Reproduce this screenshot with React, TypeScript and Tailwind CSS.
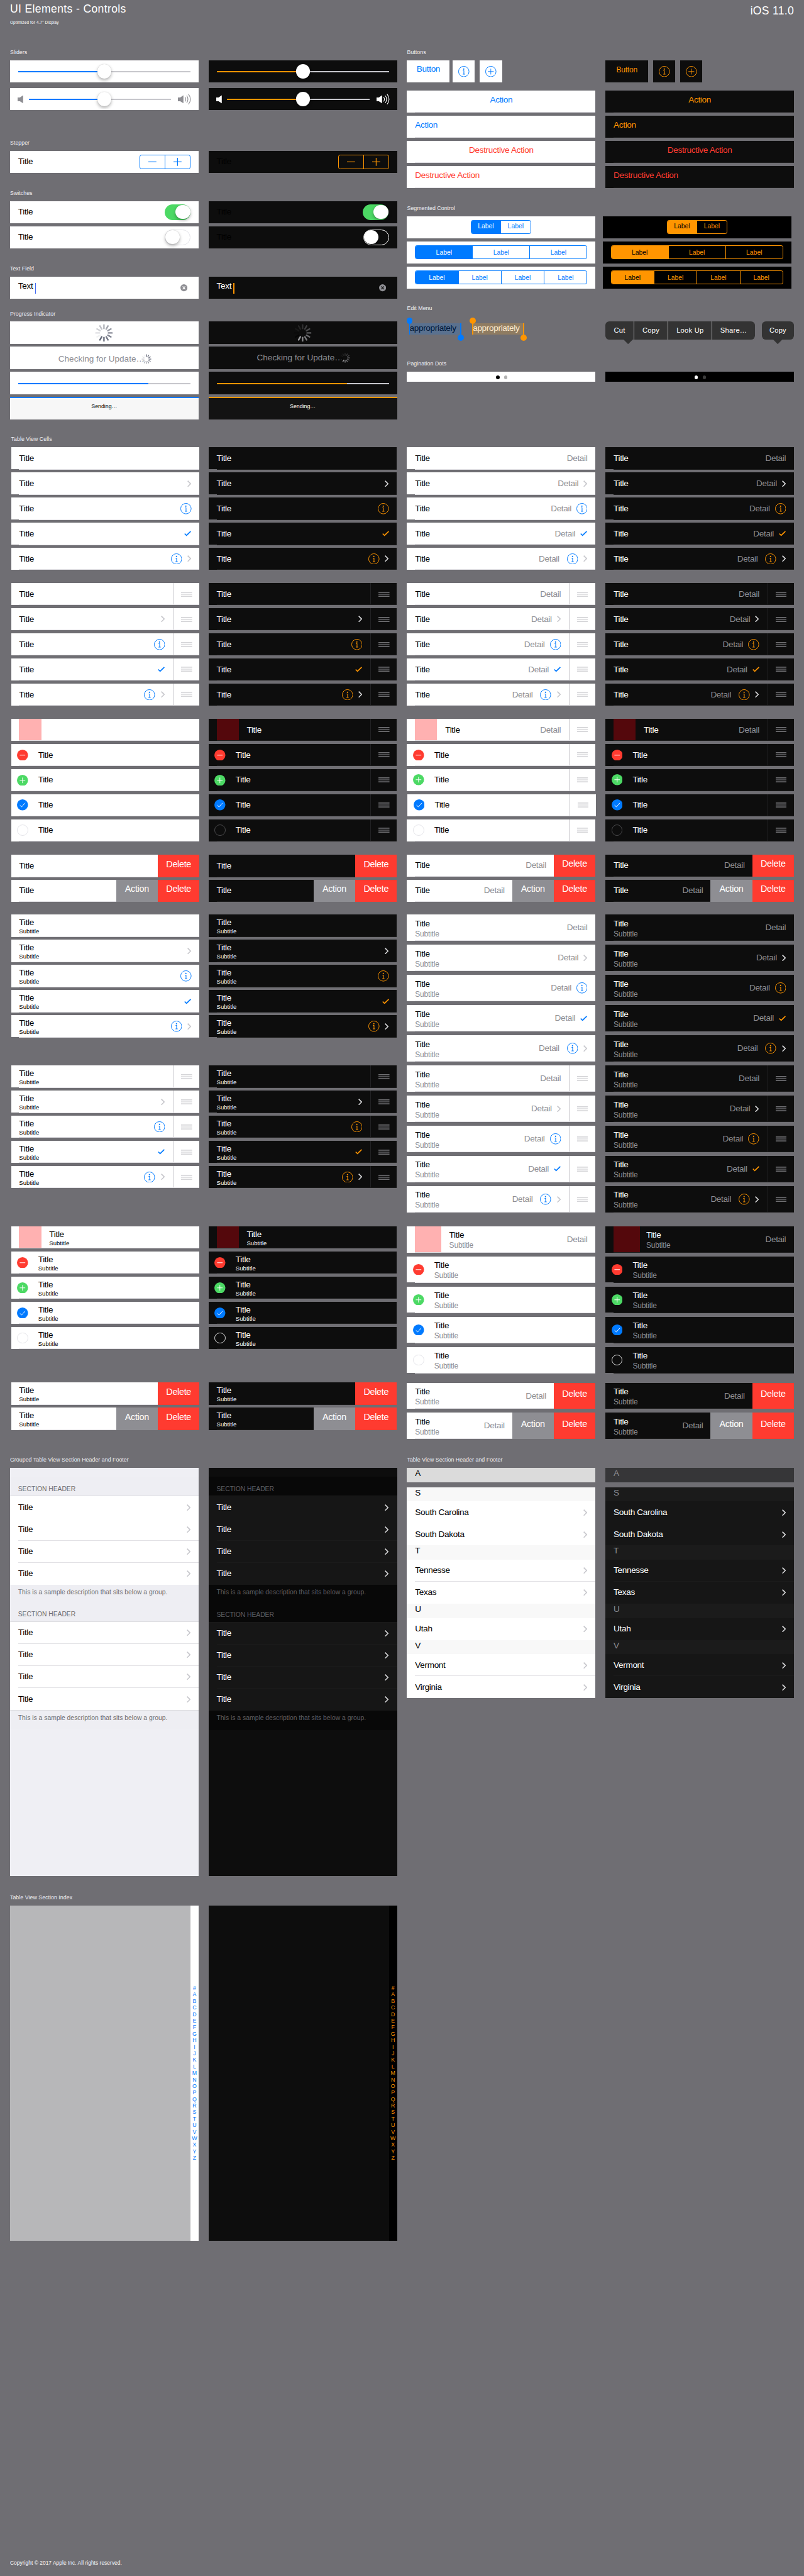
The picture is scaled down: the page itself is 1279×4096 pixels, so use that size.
import React from "react";
import clsx from "clsx";

type Themed = { dark?: boolean };
type Accessory = "chevron" | "info" | "check" | "both";
type Lead = "image" | "minus" | "plus" | "tick" | "empty";

/* ---------- Layout helpers ---------- */

function Section({ label, className, children }: { label: string; className?: string; children: React.ReactNode }) {
  return (
    <section className={className}>
      <h2 className="h-[30px] text-[11px] leading-[29px] tracking-[0.06px] text-[#efeff4]">{label}</h2>
      {children}
    </section>
  );
}

function Pair({
  className,
  gap = "gap-[6px]",
  between = "gap-[20px]",
  render,
}: {
  className?: string;
  gap?: string;
  between?: string;
  render: (dark: boolean) => React.ReactNode;
}) {
  return (
    <div className={clsx("flex", between, className)}>
      <div className={clsx("flex w-[375px] shrink-0 flex-col", gap)}>{render(false)}</div>
      <div className={clsx("flex w-[375px] shrink-0 flex-col", gap)}>{render(true)}</div>
    </div>
  );
}

function Row({ dark, className, children }: Themed & { className?: string; children?: React.ReactNode }) {
  return (
    <div className={clsx("relative flex h-[44px] shrink-0 items-center", dark ? "bg-[#0d0d0d]" : "bg-white", className)}>
      {children}
    </div>
  );
}

function Hairline({ dark }: Themed) {
  return <div className={clsx("absolute right-0 bottom-0 left-[16px] h-px", dark ? "bg-[#1b1b1b]" : "bg-[#e2e1e5]")} />;
}

/* ---------- Icons ---------- */

const accent = (dark?: boolean) => (dark ? "text-[#ff9500]" : "text-[#007aff]");

function InfoIcon({ dark }: Themed) {
  return (
    <svg viewBox="0 0 22 22" className={clsx("h-[22px] w-[22px] shrink-0", accent(dark))} fill="none" stroke="currentColor">
      <circle cx="11" cy="11" r="10.4" strokeWidth="1.2" />
      <circle cx="10.9" cy="6.1" r="1.3" fill="currentColor" stroke="none" />
      <path d="M9.2 9.3H11.2V16.2M9 16.4H13.3" strokeWidth="1.3" />
    </svg>
  );
}

function AddIcon({ dark }: Themed) {
  return (
    <svg viewBox="0 0 22 22" className={clsx("h-[22px] w-[22px] shrink-0", accent(dark))} fill="none" stroke="currentColor">
      <circle cx="11" cy="11" r="10.4" strokeWidth="1.2" />
      <path d="M5.2 11H16.8M11 5.2V16.8" strokeWidth="1.1" />
    </svg>
  );
}

function Chevron({ dark }: Themed) {
  return (
    <svg viewBox="0 0 8 13" className={clsx("h-[13px] w-[8px] shrink-0", dark ? "text-[#d8d8da]" : "text-[#c7c7cc]")} fill="none" stroke="currentColor" strokeWidth="2">
      <path d="M0.8 0.8L6.5 6.5L0.8 12.2" />
    </svg>
  );
}

function Check({ dark }: Themed) {
  return (
    <svg viewBox="0 0 14 11" className={clsx("h-[11px] w-[14px] shrink-0", accent(dark))} fill="none" stroke="currentColor" strokeWidth="2.1">
      <path d="M1 5.6L4.6 9.3L13 1" />
    </svg>
  );
}

function Grip({ dark }: Themed) {
  return (
    <div className={clsx("flex h-full w-[53px] shrink-0 items-center border-l pl-[15px]", dark ? "border-[#222224]" : "border-[#c8c7cc]")}>
      <svg viewBox="0 0 22 10" className={clsx("h-[10px] w-[22px]", dark ? "text-[#8e8e93]" : "text-[#c7c7cc]")} stroke="currentColor" strokeWidth="1.5">
        <path d="M0 1H22M0 5H22M0 9H22" />
      </svg>
    </div>
  );
}

function LeadIcon({ kind, ring }: { kind: Exclude<Lead, "image">; ring: string }) {
  if (kind === "empty") return <div className={clsx("h-[22px] w-[22px] shrink-0 rounded-full border", ring)} />;
  const fill = { minus: "text-[#ff3b30]", plus: "text-[#4cd964]", tick: "text-[#007aff]" }[kind];
  const path = { minus: "M5.5 11H16.5", plus: "M5.5 11H16.5M11 5.5V16.5", tick: "M5.8 11.6L9.3 15L16.3 7.2" }[kind];
  return (
    <svg viewBox="0 0 22 22" className={clsx("h-[22px] w-[22px] shrink-0", fill)}>
      <circle cx="11" cy="11" r="11" fill="currentColor" />
      <path d={path} fill="none" stroke="white" strokeWidth="1.2" />
    </svg>
  );
}

function Speaker({ loud, className }: { loud?: boolean; className?: string }) {
  return (
    <svg viewBox={loud ? "0 0 27 22" : "0 0 11 22"} className={clsx("h-[22px] shrink-0", loud ? "w-[27px]" : "w-[11px]", className)}>
      <path d="M0 7.4H4.6L11 3V19L4.6 14.9H0Z" fill="currentColor" />
      {loud && (
        <path d="M14 6.6Q17.6 11 14 15.6M17.4 3.8Q22.6 11 17.4 18.4M21 0.8Q28.8 11 21 21.2" fill="none" stroke="currentColor" strokeWidth="1.4" />
      )}
    </svg>
  );
}

/* Twelve rounded spokes; shades run clockwise beginning at the given spoke. */
function Spinner({ className, from, shades }: { className: string; from: number; shades: string[] }) {
  return (
    <svg viewBox="-18 -18 36 36" className={className}>
      {shades.map((c, i) => (
        <rect key={i} x="-1.5" y="-17.5" width="3" height="10" rx="1.5" fill={c} transform={`rotate(${(from + i) * 30})`} />
      ))}
    </svg>
  );
}

const lightShades = ["#f1f2f3", "#dfe0e3", "#cfd0d4", "#c0c1c7", "#b1b3ba", "#a3a5ae", "#9497a2", "#898c98", "#7e818f", "#757986", "#6d7180", "#656a79"];
const darkShades = ["#050505", "#0a0a0a", "#191919", "#242424", "#303031", "#3d3d3f", "#4b4b4d", "#5a5a5c", "#69696c", "#78787b", "#87878a", "#98989b"];

/* ---------- Controls ---------- */

function Knob({ className }: { className?: string }) {
  return <div className={clsx("absolute rounded-full bg-white shadow-[0_3px_6px_rgba(0,0,0,0.3),0_0_1px_rgba(0,0,0,0.25)]", className)} />;
}

function Slider({ dark, volume }: Themed & { volume?: boolean }) {
  return (
    <Row dark={dark} className={volume ? "pr-[14px] pl-[15px]" : "px-[16px]"}>
      {volume && <Speaker className={clsx("mr-[11px]", dark ? "text-white" : "text-[#8e8e93]")} />}
      <div className="mt-[2px] flex h-[2px] flex-1">
        <div className={clsx("h-full", volume ? "w-[150px]" : "w-[171px]", dark ? "bg-[#ff9500]" : "bg-[#007aff]")} />
        <div className="h-full flex-1 bg-[#c7c7cc]" />
      </div>
      {volume && <Speaker loud className={clsx("ml-[14px]", dark ? "text-white" : "text-[#8e8e93]")} />}
      <Knob className="top-[8px] left-[174px] h-[28px] w-[28px]" />
    </Row>
  );
}

function FieldTitle() {
  return <span className="text-[17px] tracking-[-0.41px] text-black">Title</span>;
}

function Stepper({ dark }: Themed) {
  return (
    <Row dark={dark} className="justify-between px-[16px]">
      <FieldTitle />
      <div className={clsx("flex h-[28px] w-[101px] rounded-[4px] border border-current", accent(dark))}>
        <div className="flex flex-1 items-center justify-center border-r border-current">
          <svg viewBox="0 0 16 16" className="h-[16px] w-[16px]" stroke="currentColor" strokeWidth="1.5"><path d="M0 8H16" /></svg>
        </div>
        <div className="flex flex-1 items-center justify-center">
          <svg viewBox="0 0 16 16" className="h-[16px] w-[16px]" stroke="currentColor" strokeWidth="1.5"><path d="M0 8H16M8 0V16" /></svg>
        </div>
      </div>
    </Row>
  );
}

function Switch({ dark, on }: Themed & { on?: boolean }) {
  return (
    <Row dark={dark} className={clsx("justify-between pl-[16px]", dark && on ? "pr-[17px]" : "pr-[16px]")}>
      <FieldTitle />
      <div
        className={clsx(
          "relative h-[31px] w-[51px] rounded-full",
          on ? "bg-[#4cd964]" : dark ? "border-[1.5px] border-white bg-[#0d0d0d]" : "border-[1.5px] border-[#e5e5ea] bg-white",
        )}
      >
        <Knob className={clsx("h-[28px] w-[29px]", on ? "top-[1.5px] right-[0.5px]" : "top-0 left-0")} />
      </div>
    </Row>
  );
}

function TextField({ dark }: Themed) {
  return (
    <Row dark={dark} className="pr-[22px] pl-[16px]">
      <span className={clsx("pb-[6px] text-[17px] tracking-[-0.41px]", dark ? "text-white" : "text-black")}>Text</span>
      <div className={clsx("mt-[4px] ml-[4px] h-[21px] w-[2px]", dark ? "bg-[#ff9500]" : "bg-[#426bf2]")} />
      <svg viewBox="0 0 14 14" className="mt-[2px] ml-auto h-[14px] w-[14px]">
        <circle cx="7" cy="7" r="7" fill="#8e8e93" />
        <path d="M4.5 4.2L9.5 9.8M9.5 4.2L4.5 9.8" stroke={dark ? "#0d0d0d" : "#fff"} strokeWidth="1.6" />
      </svg>
    </Row>
  );
}

function Progress({ dark }: Themed) {
  return (
    <>
      <Row dark={dark} className="justify-center">
        <Spinner className="h-[36px] w-[36px]" from={8} shades={dark ? darkShades : lightShades} />
      </Row>
      <Row dark={dark} className={clsx("pl-[96px]", !dark && "pt-[6px]")}>
        <span className="text-[17px] text-[#8e8e93]">Checking for Update…</span>
        <Spinner
          className={clsx("absolute h-[20px] w-[20px]", dark ? "top-[12px] left-[262px]" : "top-[15px] left-[261px]")}
          from={dark ? 8 : 0}
          shades={dark ? darkShades : [...lightShades].reverse()}
        />
      </Row>
      <Row dark={dark} className="px-[16px]">
        <div className="mt-[2px] flex h-[2px] flex-1">
          <div className={clsx("h-full w-[259px]", dark ? "bg-[#ff9500]" : "bg-[#007aff]")} />
          <div className="h-full flex-1 bg-[#c7c7cc]" />
        </div>
      </Row>
      <div className={clsx("flex h-[44px] flex-col items-center", dark ? "bg-[#131313]" : "bg-[#f7f7f7]")}>
        <div className={clsx("h-[2px] w-full", dark ? "bg-[#ff9500]" : "bg-[#007aff]")} />
        <span className={clsx("text-[11px] leading-[35px]", dark ? "text-white" : "text-black")}>Sending…</span>
      </div>
    </>
  );
}

function ButtonTrio({ dark }: Themed) {
  return (
    <div className={clsx("mb-[10px] flex", dark ? "gap-[10px]" : "gap-[6px]")}>
      <Row dark={dark} className="w-[85px] justify-center">
        <span className={clsx(accent(dark), dark ? "pb-[4px] text-[15px] tracking-[-0.24px]" : "pb-[8px] text-[17px] tracking-[-0.41px]")}>Button</span>
      </Row>
      <Row dark={dark} className={clsx("w-[44px] justify-center", !dark && "mr-[4px]")}>
        <InfoIcon dark={dark} />
      </Row>
      <Row dark={dark} className="w-[44px] justify-center">
        <AddIcon dark={dark} />
      </Row>
    </div>
  );
}

function ActionRow({ dark, danger, center }: Themed & { danger?: boolean; center?: boolean }) {
  return (
    <Row dark={dark} className={clsx("px-[16px] pb-[6px]", center && "justify-center")}>
      <span className={clsx("text-[17px] tracking-[-0.41px]", danger ? "text-[#ff3b30]" : accent(dark))}>
        {danger ? "Destructive Action" : "Action"}
      </span>
      <Hairline dark={dark} />
    </Row>
  );
}

function Segmented({ dark, count }: Themed & { count: number }) {
  const wide = count > 2;
  return (
    <div className={clsx("flex h-[44px] items-center justify-center", dark ? "bg-black pr-[1px]" : "bg-white", !wide && !dark && "pr-[2px]")}>
      <div className={clsx("flex h-[28px] overflow-hidden rounded-[4px] border border-current", wide ? "w-[343px]" : "w-[120px]", accent(dark))}>
        {Array.from({ length: count }, (_, i) => (
          <div
            key={i}
            className={clsx(
              "flex flex-1 items-center justify-center text-[13px]",
              wide ? "pt-[1px]" : "pb-[4px]",
              i > 0 && "border-l border-current",
              i === 0 && (dark ? "bg-[#ff9500]" : "bg-[#007aff]"),
            )}
          >
            <span className={clsx(i === 0 && (dark ? "text-black" : "text-white"))}>Label</span>
          </div>
        ))}
      </div>
    </div>
  );
}

function Selection({ dark }: Themed) {
  const tone = dark ? "bg-[#ff9500]" : "bg-[#007aff]";
  return (
    <div
      className={clsx(
        "relative h-[23px] text-[17px] leading-[21px] tracking-[-0.41px]",
        dark ? "w-[101px] bg-[#8f7c62] text-[#ffeacd]" : "w-[102px] bg-[#5a718f] text-[#00183a]",
      )}
    >
      <div className={clsx("absolute -top-px -left-px h-[24px] w-[2px]", tone)} />
      <div className={clsx("absolute top-[-11px] left-[-6px] h-[12px] w-[12px] rounded-full", tone)} />
      <div className={clsx("absolute top-0 right-[-1px] h-[24px] w-[2px]", tone)} />
      <div className={clsx("absolute right-[-6px] bottom-[-12px] h-[12px] w-[12px] rounded-full", tone)} />
      appropriately
    </div>
  );
}

function MenuArrow({ className }: { className: string }) {
  return (
    <svg viewBox="0 0 18 9" className={clsx("absolute top-[36px] h-[9px] w-[18px]", className)}>
      <path d="M0 0H18L9 9Z" fill="#333333" />
    </svg>
  );
}

function EditMenu() {
  const item = "flex h-full items-center justify-center";
  return (
    <div className="flex justify-between text-[14px] tracking-[0.3px] text-white">
      <div className="relative flex h-[36px] w-[297px] rounded-[8px] bg-[#333333]">
        <div className={clsx(item, "w-[57px] border-r border-[#a8a8aa]")}>Cut</div>
        <div className={clsx(item, "w-[68px] border-r border-[#a8a8aa]")}>Copy</div>
        <div className={clsx(item, "w-[88px] border-r border-[#a8a8aa]")}>Look Up</div>
        <div className={clsx(item, "flex-1")}>Share…</div>
        <MenuArrow className="left-[36px]" />
      </div>
      <div className="relative h-[36px] w-[64px] rounded-[8px] bg-[#333333]">
        <div className={item}>Copy</div>
        <MenuArrow className="left-[23px]" />
      </div>
    </div>
  );
}

function Dots({ dark }: Themed) {
  return (
    <div className={clsx("flex h-[20px] items-center justify-center gap-[9px] pt-px pl-[2px]", dark ? "bg-black" : "bg-white")}>
      <div className={clsx("h-[7px] w-[7px] rounded-full", dark ? "bg-white" : "bg-black")} />
      <div className={clsx("h-[7px] w-[7px] rounded-full", dark ? "bg-[#3c3c3c]" : "bg-[#b2b2b2]")} />
    </div>
  );
}

/* ---------- Table view cells ---------- */

type CellProps = Themed & {
  acc?: Accessory;
  detail?: boolean;
  sub?: "small" | "large";
  lead?: Lead;
  grip?: boolean;
  swipe?: 1 | 2;
  hideTitle?: boolean;
  ring?: string;
  className?: string;
};

function Cell({ dark, acc, detail, sub, lead, grip, swipe, hideTitle, ring, className }: CellProps) {
  const tall = sub === "large";
  const tone = dark ? "text-white" : "text-black";
  return (
    <div className={clsx("relative flex shrink-0", tall ? "h-[52px]" : "h-[44px]", dark ? "bg-[#0d0d0d]" : "bg-white", className)}>
      <div className={clsx("flex flex-1 items-center", swipe ? "pr-[15px]" : "pr-[16px]", lead && lead !== "image" ? "pl-[12px]" : "pl-[16px]")}>
        {lead === "image" && (
          <div className={clsx("h-full shrink-0", tall ? "w-[52px]" : "w-[44px]", dark ? "bg-[#54080c]" : "bg-[#ffb1b1]", tall && dark ? "mr-[13px]" : "mr-[16px]")} />
        )}
        {lead && lead !== "image" && (
          <div className="mr-[20px] flex">
            <LeadIcon kind={lead} ring={ring ?? (dark ? "border-[#4a4a4c]" : "border-[#e5e5ea]")} />
          </div>
        )}
        <div className={clsx("flex flex-col", hideTitle && "invisible")}>
          <span
            className={clsx(
              "text-[17px] tracking-[-0.41px]",
              tone,
              sub ? "leading-[20px]" : "leading-[22px]",
              sub === "small" && "pt-[3px]",
              sub === "large" && "pt-[5px]",
            )}
          >
            Title
          </span>
          {sub === "small" && <span className={clsx("pb-px text-[12px] leading-[14px]", tone)}>Subtitle</span>}
          {sub === "large" && <span className="text-[15px] leading-[21px] tracking-[-0.24px] text-[#8e8e93]">Subtitle</span>}
        </div>
        <div className="ml-auto flex items-center">
          {detail && (
            <span className={clsx("text-[17px] leading-[22px] tracking-[-0.41px] text-[#8e8e93]", acc === "both" ? "mr-[15px]" : acc ? "mr-[10px]" : "")}>Detail</span>
          )}
          {(acc === "info" || acc === "both") && <InfoIcon dark={dark} />}
          {acc === "both" && <div className="w-[11px]" />}
          {(acc === "chevron" || acc === "both") && <Chevron dark={dark} />}
          {acc === "check" && <Check dark={dark} />}
        </div>
      </div>
      {grip && <Grip dark={dark} />}
      <Hairline dark={dark} />
      {swipe === 2 && <SwipeButton tall={tall} className="bg-[#8e8e93]">Action</SwipeButton>}
      {swipe && <SwipeButton tall={tall} className="bg-[#ff3b30]">Delete</SwipeButton>}
    </div>
  );
}

function SwipeButton({ tall, className, children }: { tall: boolean; className: string; children: string }) {
  return (
    <div className={clsx("relative z-10 flex w-[83px] shrink-0 items-center justify-center text-[18px] tracking-[-0.4px] text-white", tall ? "pb-[6px]" : "pb-[5px]", className)}>
      {children}
    </div>
  );
}

const accessories: (Accessory | undefined)[] = [undefined, "chevron", "info", "check", "both"];
const leads: Lead[] = ["image", "minus", "plus", "tick", "empty"];

function AccessoryCells(props: CellProps) {
  return (
    <>
      {accessories.map((acc, i) => (
        <Cell key={i} {...props} acc={acc} />
      ))}
    </>
  );
}

/* ---------- Grouped and plain tables ---------- */

function ListRow({ dark, last, children }: Themed & { last?: boolean; children: string }) {
  return (
    <div className={clsx("relative flex h-[44px] items-center justify-between px-[16px] text-[17px]", dark ? "bg-[#161616] text-white" : "bg-white text-black")}>
      <span className="tracking-[-0.41px]">{children}</span>
      <Chevron dark={dark} />
      {!last && <Hairline dark={dark} />}
    </div>
  );
}

function Group({ dark, header }: Themed & { header: string }) {
  const note = dark ? "text-[#5f5f63]" : "text-[#6d6d72]";
  return (
    <div className={clsx(dark ? "bg-[#080808]" : "bg-[#eeeef3]")}>
      <div className={clsx("flex items-end px-[16px] text-[13px] leading-[26px] tracking-[-0.08px]", header, note)}>SECTION HEADER</div>
      <div className={clsx("border-y", dark ? "border-[#1a1a1a]" : "border-[#dddde1]")}>
        <ListRow dark={dark}>Title</ListRow>
        <ListRow dark={dark}>Title</ListRow>
        <ListRow dark={dark}>Title</ListRow>
        <div className="-mb-px">
          <ListRow dark={dark} last>Title</ListRow>
        </div>
      </div>
      <div className={clsx("h-[38px] px-[16px] text-[13px] leading-[29px]", note)}>This is a sample description that sits below a group.</div>
    </div>
  );
}

function GroupedTable({ dark }: Themed) {
  return (
    <div className={clsx("h-[812px] pt-[17px]", dark ? "bg-[#0d0d0d]" : "bg-[#efeff4]")}>
      <Group dark={dark} header="h-[38px]" />
      <Group dark={dark} header={dark ? "h-[35px]" : "h-[34px]"} />
    </div>
  );
}

const states: [string, string[]][] = [
  ["S", ["South Carolina", "South Dakota"]],
  ["T", ["Tennesse", "Texas"]],
  ["U", ["Utah"]],
  ["V", ["Vermont", "Virginia"]],
];

function PlainHeader({ dark, className, children }: Themed & { className: string; children: string }) {
  return (
    <div className={clsx("h-[28px] px-[16px] text-[17px] leading-[22px]", dark ? "text-[#8e8e93]" : "text-black", className)}>{children}</div>
  );
}

function PlainTable({ dark }: Themed) {
  return (
    <>
      <PlainHeader dark={dark} className={dark ? "bg-[#363638]" : "bg-[#dbdbdb]"}>A</PlainHeader>
      <div>
        {states.map(([letter, names]) => (
          <div key={letter}>
            <PlainHeader dark={dark} className={dark ? "bg-[#1b1b1b]" : "bg-[#f8f8f8]"}>{letter}</PlainHeader>
            {names.map((n, i) => (
              <ListRow key={n} dark={dark} last={i === names.length - 1}>{n}</ListRow>
            ))}
          </div>
        ))}
      </div>
    </>
  );
}

function SectionIndex({ dark }: Themed) {
  return (
    <div className={clsx("flex h-[667px] justify-end", dark ? "bg-[#0d0d0d]" : "bg-[#b7b7b9]")}>
      <div className={clsx("flex w-[16px] flex-col items-center pt-[158px] text-[11px] leading-[13px]", accent(dark), dark ? "bg-black" : "bg-white")}>
        {"#ABCDEFGHIJKLMNOPQRSTUVWXYZ".split("").map((c) => (
          <span key={c}>{c}</span>
        ))}
      </div>
    </div>
  );
}

/* ---------- Page ---------- */

export default function App() {
  const table = { className: "ml-[2px]", between: "gap-[18px]" };
  return (
    <div className="flex h-[5124px] w-[1600px] flex-col overflow-hidden bg-[#6f6e73] font-['Liberation_Sans',Arial,sans-serif] [zoom:0.799375]">
      <header className="flex h-[90px] shrink-0 justify-between px-[20px] text-white">
        <div>
          <h1 className="pt-[5px] text-[22px] leading-[25px] tracking-[0.45px]">UI Elements - Controls</h1>
          <p className="mt-[10px] text-[8px] leading-[11px] tracking-[0.2px]">Optimized for 4.7" Display</p>
        </div>
        <div className="pt-[9px] text-[22px] leading-[25px] tracking-[0.35px]">iOS 11.0</div>
      </header>

      <main className="flex gap-[20px] px-[20px]">
        <div className="w-[770px] shrink-0">
          <Section label="Sliders">
            <Pair gap="gap-[11px]" render={(d) => (<><Slider dark={d} /><Slider dark={d} volume /></>)} />
          </Section>
          <Section label="Stepper" className="mt-[51px]">
            <Pair render={(d) => <Stepper dark={d} />} />
          </Section>
          <Section label="Switches" className="mt-[26px]">
            <Pair render={(d) => (<><Switch dark={d} on /><Switch dark={d} /></>)} />
          </Section>
          <Section label="Text Field" className="mt-[26px]">
            <Pair render={(d) => <TextField dark={d} />} />
          </Section>
          <Section label="Progress Indicator" className="mt-[16px]">
            <Pair render={(d) => <Progress dark={d} />} />
          </Section>

          <section className="mt-[26px]">
            <h2 className="ml-[2px] h-[30px] text-[11px] leading-[29px] tracking-[0.06px] text-[#efeff4]">Table View Cells</h2>
            <Pair {...table} render={(d) => <AccessoryCells dark={d} />} />
            <Pair {...table} className="mt-[26px] ml-[2px]" render={(d) => <AccessoryCells dark={d} grip />} />
            <Pair
              {...table}
              className="mt-[26px] ml-[2px]"
              render={(d) => leads.map((l) => <Cell key={l} dark={d} lead={l} grip={d} hideTitle={!d && l === "image"} />)}
            />
            <Pair {...table} gap="gap-[5px]" className="mt-[27px] ml-[2px]" render={(d) => (<><Cell dark={d} swipe={1} /><Cell dark={d} swipe={2} /></>)} />
            <Pair {...table} className="mt-[26px] ml-[2px]" render={(d) => <AccessoryCells dark={d} sub="small" />} />
            <Pair {...table} className="mt-[56px] ml-[2px]" render={(d) => <AccessoryCells dark={d} sub="small" grip />} />
            <Pair
              {...table}
              className="mt-[76px] ml-[2px]"
              render={(d) => leads.map((l) => <Cell key={l} dark={d} lead={l} sub="small" ring={d ? "border-[#d8d8d8]" : undefined} />)}
            />
            <Pair {...table} className="mt-[67px] ml-[2px]" render={(d) => (<><Cell dark={d} swipe={1} sub="small" /><Cell dark={d} swipe={2} sub="small" /></>)} />
          </section>

          <Section label="Grouped Table View Section Header and Footer" className="mt-[46px]">
            <Pair render={(d) => <GroupedTable dark={d} />} />
          </Section>
          <Section label="Table View Section Index" className="mt-[28px]">
            <Pair render={(d) => <SectionIndex dark={d} />} />
          </Section>
        </div>

        <div className="w-[770px] shrink-0">
          <Section label="Buttons">
            <Pair
              render={(d) => (
                <>
                  <ButtonTrio dark={d} />
                  <ActionRow dark={d} center />
                  <ActionRow dark={d} />
                  <ActionRow dark={d} danger center />
                  <ActionRow dark={d} danger />
                </>
              )}
            />
          </Section>
          <Section label="Segmented Control" className="mt-[26px]">
            <Pair between="gap-[15px]" render={(d) => (<><Segmented dark={d} count={2} /><Segmented dark={d} count={3} /><Segmented dark={d} count={4} /></>)} />
          </Section>
          <Section label="Edit Menu" className="mt-[26px]">
            <div className="flex h-[80px] gap-[20px]">
              <div className="flex w-[375px] gap-[24px] pt-[13px] pl-[5px]">
                <Selection />
                <Selection dark />
              </div>
              <div className="w-[375px] pt-[10px]">
                <EditMenu />
              </div>
            </div>
          </Section>
          <Section label="Pagination Dots">
            <Pair render={(d) => <Dots dark={d} />} />
          </Section>

          <section className="mt-[130px]">
            <Pair render={(d) => <AccessoryCells dark={d} detail />} />
            <Pair className="mt-[26px]" render={(d) => <AccessoryCells dark={d} detail grip />} />
            <Pair
              className="mt-[26px]"
              render={(d) => leads.map((l) => <Cell key={l} dark={d} lead={l} grip detail={l === "image"} className={!d && l === "tick" ? "ml-px -mr-px" : undefined} />)}
            />
            <Pair className="mt-[26px]" render={(d) => (<><Cell dark={d} swipe={1} detail /><Cell dark={d} swipe={2} detail /></>)} />
            <Pair gap="gap-[8px]" className="mt-[26px]" render={(d) => <AccessoryCells dark={d} detail sub="large" />} />
            <Pair gap="gap-[8px]" className="mt-[8px]" render={(d) => <AccessoryCells dark={d} detail sub="large" grip />} />
            <Pair
              gap="gap-[8px]"
              className="mt-[28px]"
              render={(d) => leads.map((l) => <Cell key={l} dark={d} lead={l} sub="large" detail={l === "image"} ring={d ? "border-[#d8d8d8]" : undefined} />)}
            />
            <Pair gap="gap-[8px]" className="mt-[19px]" render={(d) => (<><Cell dark={d} swipe={1} detail sub="large" /><Cell dark={d} swipe={2} detail sub="large" /></>)} />
          </section>

          <Section label="Table View Section Header and Footer" className="mt-[28px]">
            <Pair gap="gap-[10px]" render={(d) => <PlainTable dark={d} />} />
          </Section>
        </div>
      </main>

      <footer className="mt-auto px-[20px] pb-[19px] text-[10.5px] leading-[14px] tracking-[0.06px] text-white">
        Copyright © 2017 Apple Inc. All rights reserved.
      </footer>
    </div>
  );
}
